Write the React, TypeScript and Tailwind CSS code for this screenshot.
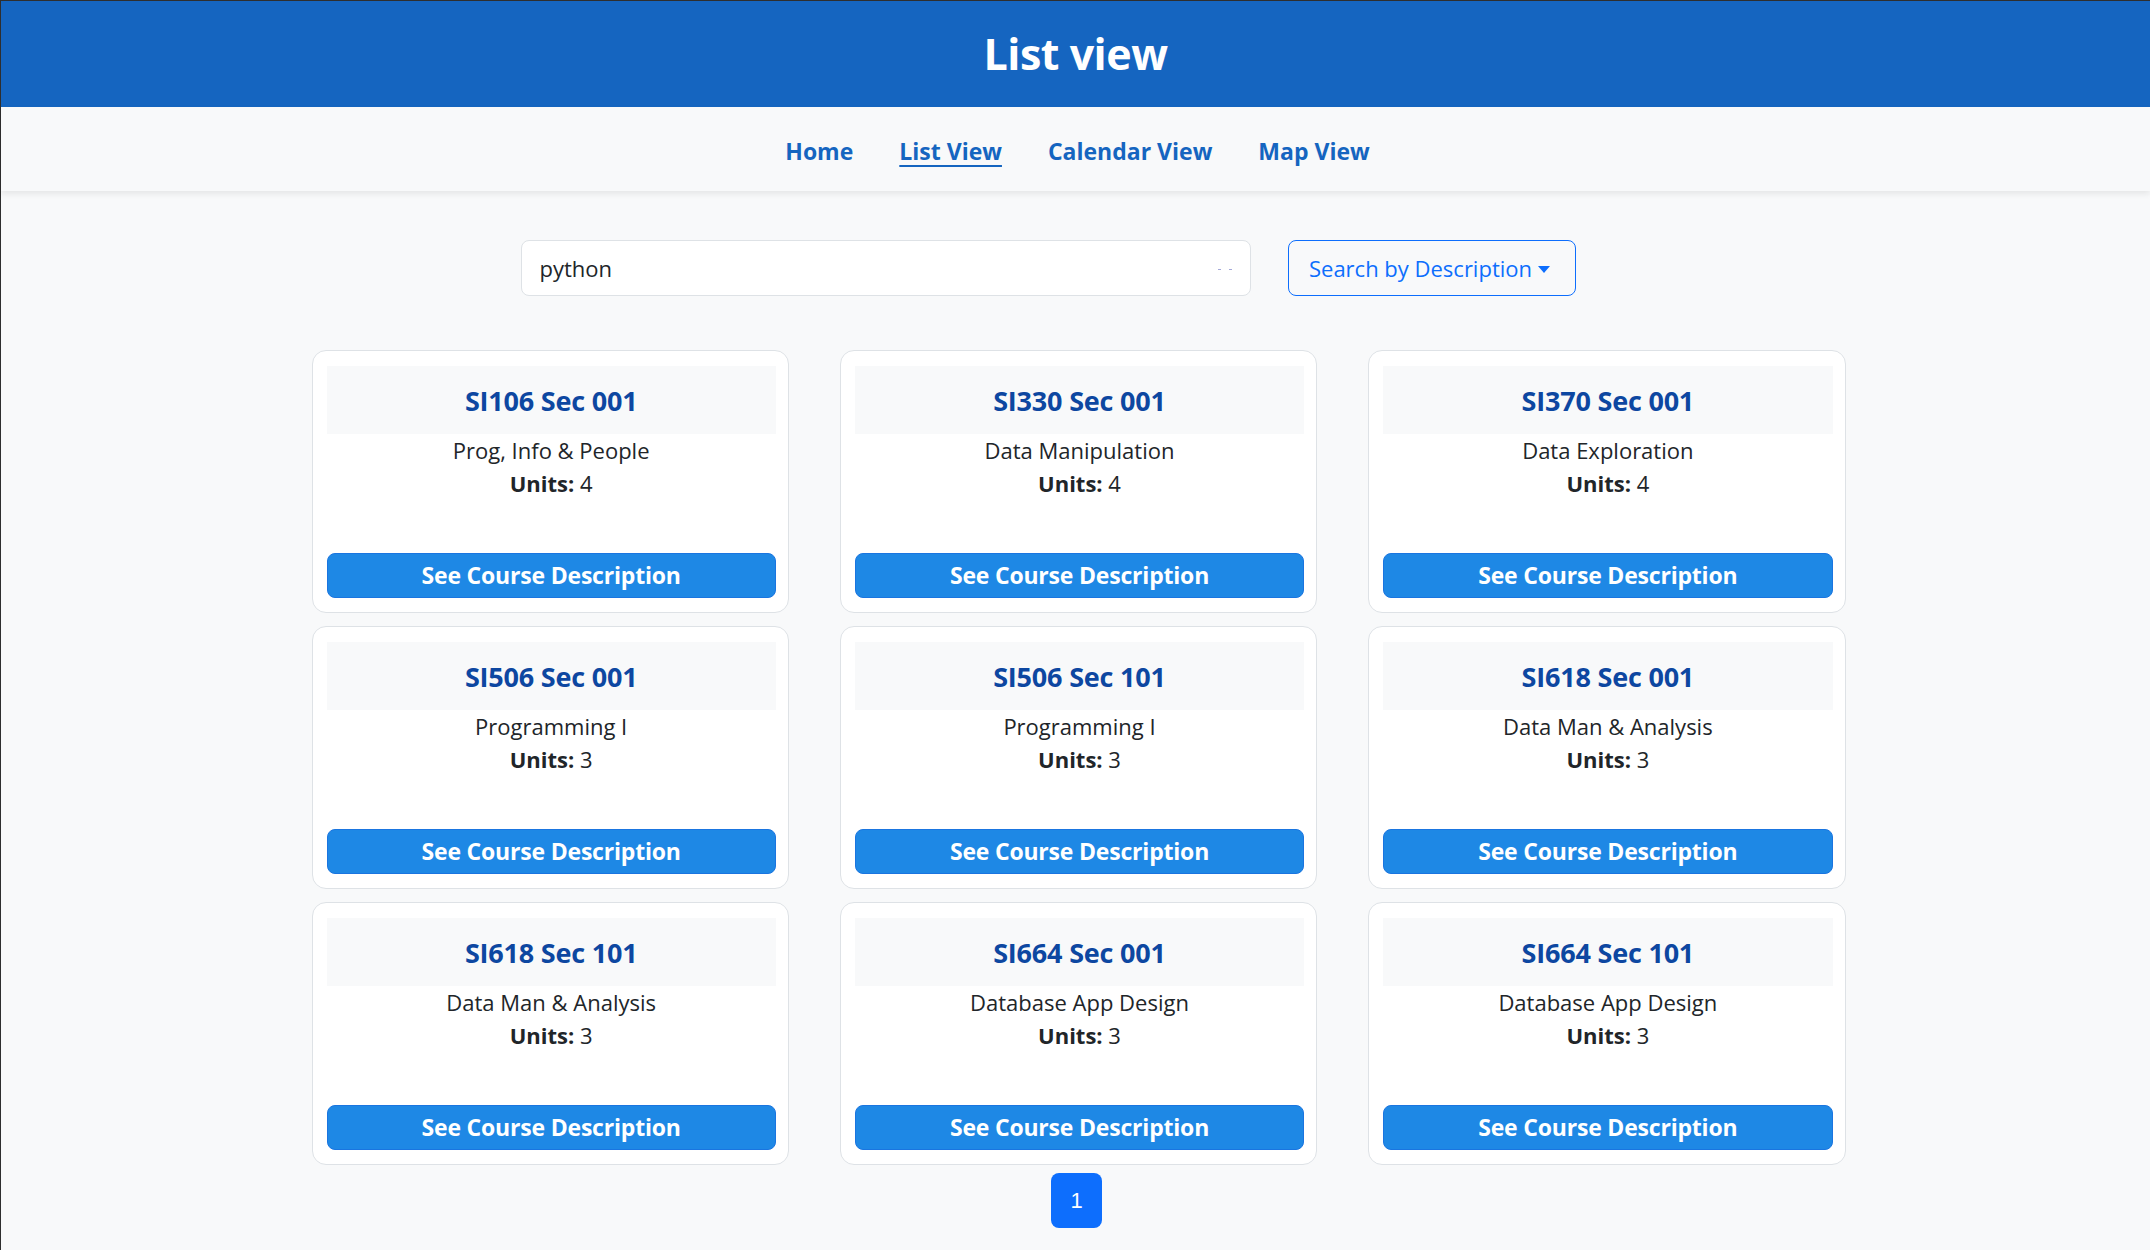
import React from 'react';

interface Course {
  code: string;
  section: string;
  title: string;
  units: number;
}

const courses: Course[] = [
  { code: 'SI106', section: '001', title: 'Prog, Info & People', units: 4 },
  { code: 'SI330', section: '001', title: 'Data Manipulation', units: 4 },
  { code: 'SI370', section: '001', title: 'Data Exploration', units: 4 },
  { code: 'SI506', section: '001', title: 'Programming I', units: 3 },
  { code: 'SI506', section: '101', title: 'Programming I', units: 3 },
  { code: 'SI618', section: '001', title: 'Data Man & Analysis', units: 3 },
  { code: 'SI618', section: '101', title: 'Data Man & Analysis', units: 3 },
  { code: 'SI664', section: '001', title: 'Database App Design', units: 3 },
  { code: 'SI664', section: '101', title: 'Database App Design', units: 3 },
];

const navLinks = ['Home', 'List View', 'Calendar View', 'Map View'];

const CourseCard: React.FC<{ course: Course }> = ({ course }) => (
  <div className="flex h-[263px] flex-col rounded-[14px] border border-[#dee2e6] bg-white pt-[15px] pr-[12px] pb-[14px] pl-[14px]">
    <div className="flex h-[68px] items-center justify-center bg-[#f8f9fa] pt-[3px]">
      <h5 className="text-[27px] font-bold tracking-[-0.2px] text-[#0d47a1]">
        {course.code} Sec {course.section}
      </h5>
    </div>
    <div className="text-center text-[22px] leading-[33px] text-[#212529]">
      <p>{course.title}</p>
      <p>
        <span className="font-bold">Units:</span> {course.units}
      </p>
    </div>
    <div className="flex-1" />
    <button className="h-[45px] w-full rounded-[8px] border border-[#1a75e0] bg-[#1e88e5] text-[23px] font-bold tracking-[-0.2px] text-white">
      See Course Description
    </button>
  </div>
);

export default function App() {
  return (
    <div className="min-h-[1250px] border-t border-l border-[#2e2e2e] bg-[#f8f9fa] font-['Open_Sans',sans-serif]">
      {/* Title bar */}
      <header className="flex h-[106px] items-center justify-center bg-[#1565c0]">
        <h1 className="text-[43px] font-bold tracking-[-0.5px] text-white">List view</h1>
      </header>

      {/* Nav */}
      <nav className="relative flex h-[84px] items-center justify-center gap-[46px] bg-[#f8f9fa] pt-[5px] pl-[4px] shadow-[0_3px_6px_rgba(0,0,0,0.08)]">
        {navLinks.map((link) => (
          <a
            key={link}
            href="#"
            className={`text-[23px] font-bold text-[#1565c0] ${link === 'List View' ? 'underline decoration-2 underline-offset-[5px]' : ''}`}
          >
            {link}
          </a>
        ))}
      </nav>

      {/* Search */}
      <div className="mt-[49px] flex justify-center gap-[37px] pr-[55px]">
        <div className="relative flex h-[56px] w-[730px] items-center rounded-[8px] border border-[#dee2e6] bg-white px-[18px]">
          <span className="text-[22px] text-[#212529]">python</span>
          <span className="absolute right-[18px] top-[28px] flex gap-[8px]">
            <span className="h-[1px] w-[3px] bg-[#a3a8d8]" />
            <span className="h-[1px] w-[3px] bg-[#a3a8d8]" />
          </span>
        </div>
        <button className="flex h-[56px] w-[288px] items-center justify-center gap-[6px] rounded-[8px] border border-[#0d6efd] pr-[4px] text-[22px] text-[#0d6efd]">
          Search by Description
          <span className="mt-[2px] h-0 w-0 border-x-[6px] border-t-[7px] border-x-transparent border-t-[#0d6efd]" />
        </button>
      </div>

      {/* Cards */}
      <div className="pl-[6px]">
        <div className="mx-auto mt-[54px] grid w-[1534px] grid-cols-3 gap-x-[51px] gap-y-[13px]">
          {courses.map((c) => (
            <CourseCard key={c.code + c.section} course={c} />
          ))}
        </div>
      </div>

      {/* Pagination */}
      <div className="mt-[8px] flex justify-center pl-[2px]">
        <button className="flex h-[55px] w-[51px] items-center justify-center rounded-[8px] bg-[#0d6efd] font-['Liberation_Sans',sans-serif] text-[22px] text-white">
          1
        </button>
      </div>
    </div>
  );
}
